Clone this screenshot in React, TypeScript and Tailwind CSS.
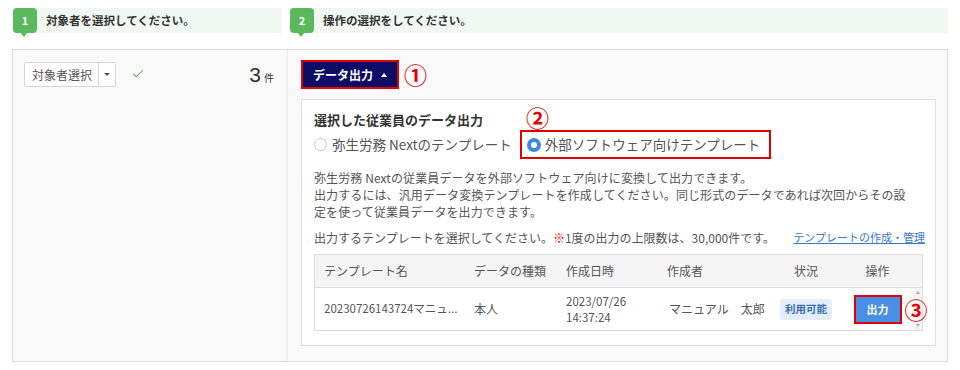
import { Check } from 'lucide-react';

const font = { fontFamily: '"Noto Sans CJK JP", "Noto Sans", sans-serif' };

function StepHeader({ num, label, width }: { num: string; label: string; width: string }) {
  return (
    <div className={`flex h-[25px] bg-[#f1f8f1] ${width}`}>
      <div className="relative flex w-[24px] items-center justify-center rounded-sm bg-[#5cb85c] text-[11px] font-bold text-white">
        {num}
        <span className="absolute left-[7px] top-[24px] h-0 w-0 border-x-[4px] border-t-[5px] border-x-transparent border-t-[#5cb85c]" />
      </div>
      <div className="flex items-center pl-[9px] text-[11.5px] font-bold text-[#333]">{label}</div>
    </div>
  );
}

function Circled({ n }: { n: string }) {
  return <span className="text-[23px] font-bold leading-none text-[#e60000]">{n}</span>;
}

export default function App() {
  return (
    <div className="h-[370px] w-[960px] overflow-hidden bg-white text-[#555]" style={font}>
      {/* ステップ見出し */}
      <div className="flex gap-[8px] pl-[13px] pt-[8px]">
        <StepHeader num="1" label="対象者を選択してください。" width="w-[269px]" />
        <StepHeader num="2" label="操作の選択をしてください。" width="w-[658px]" />
      </div>

      {/* メインパネル */}
      <div className="ml-[12px] mt-[16px] flex h-[313px] w-[936px] border border-[#dcdcdc] bg-[#f9f9f9]">
        {/* 左カラム */}
        <div className="flex w-[276px] items-start px-[11px] pt-[12px]">
          <div className="flex h-[25px] w-[92px] items-stretch rounded-[2px] border border-[#d6d6d6] bg-white">
            <span className="flex flex-1 items-center pl-[7px] text-[12px] text-[#555]">対象者選択</span>
            <span className="flex w-[17px] items-center justify-center border-l border-[#d6d6d6]">
              <span className="h-0 w-0 border-x-[3px] border-t-[3px] border-x-transparent border-t-[#555]" />
            </span>
          </div>
          <Check className="ml-[15px] mt-[5px] h-[14px] w-[14px] text-[#4caf50]" strokeWidth={1.75} />
          <div className="ml-auto mr-[2px] flex items-baseline text-[#333]">
            <span className="text-[21px] leading-[25px]" style={{ fontFamily: '"Liberation Sans", sans-serif' }}>3</span>
            <span className="ml-[3px] text-[10px]">件</span>
          </div>
        </div>

        {/* 右カラム */}
        <div className="flex-1 border-l border-[#ececec] pl-[13px] pr-[11px] pt-[10px]">
          <div className="flex items-center gap-[5px]">
            <div className="flex h-[29px] items-center gap-[8px] border-2 border-[#e00000] bg-[#0d0d66] px-[10px] text-[12px] font-bold text-white">
              データ出力
              <span className="h-0 w-0 border-x-[3px] border-b-[4px] border-x-transparent border-b-white" />
            </div>
            <Circled n="①" />
          </div>

          <div className="relative mt-[10px] h-[247px] border border-[#dedede] bg-white px-[12px] pt-[10px]">
            <div className="text-[13px] font-bold leading-[20px] text-[#333]">選択した従業員のデータ出力</div>
            <span className="absolute left-[224px] top-[6px]">
              <Circled n="②" />
            </span>

            <div className="flex h-[29px] items-center text-[13.5px]">
              <span className="h-[13px] w-[13px] rounded-full border border-[#c8c8c8] bg-white" />
              <span className="ml-[5px]">弥生労務 Nextのテンプレート</span>
              <div className="ml-[8px] flex h-[29px] items-center border-2 border-[#e00000] pl-[5px] pr-[9px]">
                <span className="flex h-[14px] w-[14px] items-center justify-center rounded-full bg-[#3d8be0]">
                  <span className="h-[6px] w-[6px] rounded-full bg-white" />
                </span>
                <span className="ml-[4px]">外部ソフトウェア向けテンプレート</span>
              </div>
            </div>

            <p className="mt-[10px] whitespace-nowrap text-[12px] leading-[17px] tracking-[0.1px]">
              弥生労務 Nextの従業員データを外部ソフトウェア向けに変換して出力できます。
              <br />
              出力するには、汎用データ変換テンプレートを作成してください。同じ形式のデータであれば次回からその設
              <br />
              定を使って従業員データを出力できます。
            </p>

            <div className="mt-[9px] flex items-center whitespace-nowrap text-[12px] leading-[17px]">
              <span>出力するテンプレートを選択してください。</span>
              <span className="text-[#e00000]">※</span>
              <span>1度の出力の上限数は、30,000件です。</span>
              <span className="ml-auto mr-[-2px] text-[11px] text-[#3a78cc] underline">テンプレートの作成・管理</span>
            </div>

            {/* テンプレート一覧 */}
            <div className="mt-[8px] w-[609px] border border-[#dcdcdc] text-[12px]">
              <div className="flex h-[33px] items-center border-b border-[#dcdcdc] bg-[#f5f5f5] text-[#555]">
                <span className="w-[150px] pl-[9px]">テンプレート名</span>
                <span className="w-[92px] pl-[9px]">データの種類</span>
                <span className="w-[101px] pl-[9px]">作成日時</span>
                <span className="w-[112px] pl-[9px]">作成者</span>
                <span className="w-[72px] text-center">状況</span>
                <span className="w-[71px] text-center">操作</span>
              </div>
              <div className="flex h-[42px] items-center">
                <span className="w-[150px] pl-[9px] text-[11.5px]">20230726143724マニュ...</span>
                <span className="w-[92px] pl-[9px]">本人</span>
                <span className="w-[101px] pl-[9px] text-[11.5px] leading-[16px]">
                  2023/07/26
                  <br />
                  14:37:24
                </span>
                <span className="w-[112px] pl-[11px]">マニュアル　太郎</span>
                <span className="flex w-[72px] justify-center">
                  <span className="flex h-[21px] items-center rounded-[3px] bg-[#e4eefb] px-[5px] text-[10.5px] font-bold text-[#3b6fb3]">
                    利用可能
                  </span>
                </span>
                <span className="flex w-[71px] justify-center">
                  <span className="relative flex h-[29px] w-[48px] items-center justify-center border-2 border-[#e00000] bg-[#4a8fe6] text-[11px] font-bold text-white">
                    出力
                    <span className="absolute left-[49px] top-[1px]">
                      <Circled n="③" />
                    </span>
                  </span>
                </span>
                <span className="ml-auto flex h-full w-[9px] flex-col items-center justify-between bg-[#f4f4f4] py-[3px]">
                  <span className="h-0 w-0 border-x-[2px] border-b-[3px] border-x-transparent border-b-[#aaa]" />
                  <span className="h-0 w-0 border-x-[2px] border-t-[3px] border-x-transparent border-t-[#aaa]" />
                </span>
              </div>
            </div>
          </div>
        </div>
      </div>
    </div>
  );
}
